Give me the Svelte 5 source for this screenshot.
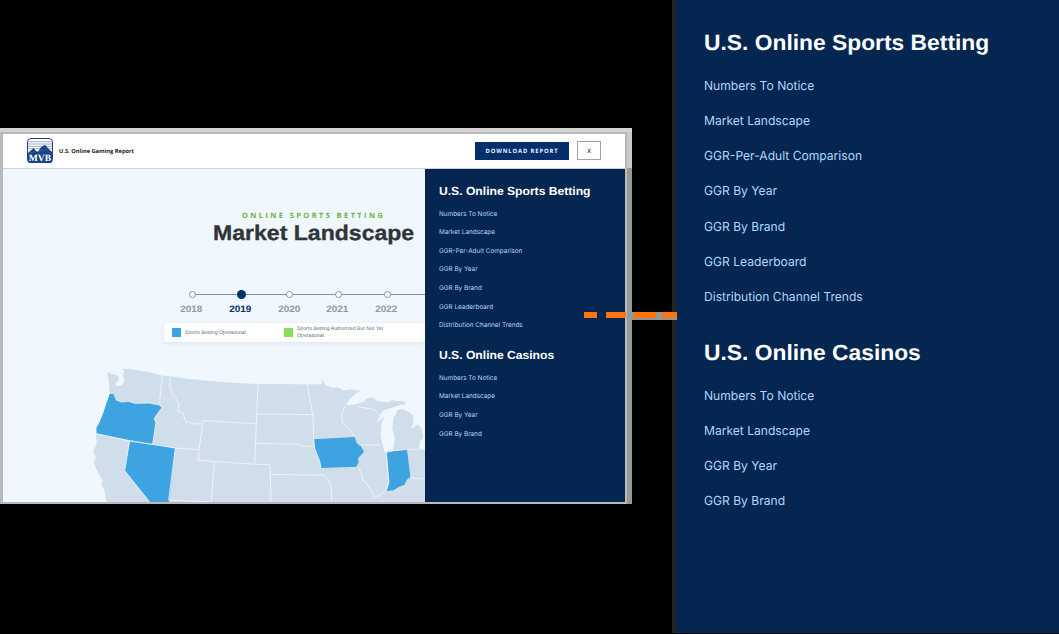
<script>
  const sections = [
    {
      title: 'U.S. Online Sports Betting',
      links: [
        'Numbers To Notice',
        'Market Landscape',
        'GGR-Per-Adult Comparison',
        'GGR By Year',
        'GGR By Brand',
        'GGR Leaderboard',
        'Distribution Channel Trends'
      ]
    },
    {
      title: 'U.S. Online Casinos',
      links: ['Numbers To Notice', 'Market Landscape', 'GGR By Year', 'GGR By Brand']
    }
  ];
  const years = [2018, 2019, 2020, 2021, 2022];
  const activeYear = 2019;
</script>

{#snippet menu()}
  {#each sections as section}
    <section>
      <h2>{section.title}</h2>
      <ul>
        {#each section.links as link}
          <li>{link}</li>
        {/each}
      </ul>
    </section>
  {/each}
{/snippet}

<div class="stage">
  <div class="window">
    <div class="screen">
      <header>
        <svg class="logo" viewBox="0 0 78 76" width="26" height="25.3">
          <rect x="1.5" y="1.5" width="75" height="73" rx="10" fill="#fff" stroke="#17407f" stroke-width="3" />
          <path d="M4 11h70M3 18h72M3 25h72M3 32h72" stroke="#8796bb" stroke-width="2.5" />
          <path d="M2 46 L12 37 L20 31 L27 39 L33 41 L42 28 L54 20 L64 32 L76 43 V66 Q76 75 66 75 H12 Q2 75 2 66Z" fill="#174481" />
          <path d="M4 49l8-7 5 3 4-6M35 46l9-12 5 6 6-9M60 38l6 6 8 5" fill="none" stroke="#4f73a5" stroke-width="1.5" />
          <text x="39" y="70" text-anchor="middle" textLength="67" lengthAdjust="spacingAndGlyphs">MVB</text>
        </svg>
        <span class="report">U.S. Online Gaming Report</span>
        <button class="download">DOWNLOAD REPORT</button>
        <button class="close">X</button>
      </header>
      <div class="body">
        <main>
          <p class="eyebrow">ONLINE SPORTS BETTING</p>
          <h1>Market Landscape</h1>
          <ol class="timeline">
            {#each years as year}
              <li class:active={year === activeYear}>
                <i></i>
                <span>{year}</span>
              </li>
            {/each}
          </ol>
          <div class="legend">
            <i class="blue"></i>
            <span class="first">Sports Betting Operational</span>
            <i class="green"></i>
            <span>Sports Betting Authorized But Not Yet<br />Operational</span>
          </div>
          <svg class="map" viewBox="-231 -30 1266 471" width="422" height="157">
            <path
              fill="#d0deeb"
              d="M82 52 L98 58 L112 61 L118 70 L114 78 L107 84 L110 93 L122 92 L131 84 L132 68 L127 60 L133 52 L126 42 L146 41 L170 46 L206 51 L247 62 L271 64 L320 71 L400 79 L470 84 L534 87 L682 88 L726 88 L725 75 L730 76 L736 91 L760 98 L774 97 L790 106 L815 103 L842 107 L822 120 L809 133 L798 149 L812 151 L832 146 L850 141 L862 130 L876 127 L892 138 L920 142 L938 136 L950 138 L970 138 L979 147 L958 151 L945 155 L926 161 L910 166 L900 182 L891 203 L908 188 L914 180 L905 205 L902 239 L907 268 L913 291 L938 286 L943 262 L944 245 L937 220 L940 190 L953 165 L966 161 L990 173 L1000 184 L1000 205 L993 222 L1004 216 L1014 206 L1026 226 L1030 247 L1020 259 L1018 278 L1035 284 V441 H80 L75 420 L74 405 L64 393 L67 376 L62 368 L48 340 L42 320 L48 307 L40 290 L50 265 L48 238 L62 195 L80 145 L89 118 L87 84Z"
            />
            <g class="lit">
              <path d="M89 117 L100 117 L107 134 L125 141 L145 139 L166 145 L208 144 L239 150 L246 158 L232 177 L223 191 L228 203 L218 267 L135 253 L50 236 L49 219 L58 203 L70 173Z" />
              <path d="M149 257 L286 279 L270 420 L267 441 H209 L134 347Z" />
              <path d="M702 253 L824 246 L830 264 L841 271 L852 290 L838 306 L834 309 L836 321 L829 335 L723 339 L719 318 L704 280Z" />
              <path d="M920 292 L981 283 L991 366 L980 375 L973 390 L956 396 L941 406 L920 408 L928 382Z" />
            </g>
            <g class="lines">
              <path d="M107 134L125 141 145 139 166 145 208 144 238 150M247 62L240 127 239 150 246 158 232 177 223 191 228 203 218 267M271 64L268 89 276 115 289 132 297 148 293 168 307 172 318 204 325 200 334 206 366 207M370 197L526 206M370 197L357 282 355 316M50 236L149 258 286 279 357 284M355 316L526 328M286 279L266 435 395 441M403 323L394 438M534 87L529 206 524 326M529 177L698 179M528 265L658 268 675 275 701 273M526 328H570L573 441M573 358L732 361 745 375 754 393V441M682 88L692 148 699 179 701 252 704 280 719 318 723 339M798 149L785 175 787 204 813 226 823 246M832 155L885 164 899 182M836 270L902 270M834 338L845 355 848 374 864 393 878 413 883 432" />
              <path d="M919 292L926 382 918 408 884 428M920 292L943 286 1035 281M991 366L1004 370 1035 372M149 257L134 347 209 441" />
            </g>
          </svg>
        </main>
        <aside class="menu small">{@render menu()}</aside>
      </div>
    </div>
  </div>
  <aside class="menu large">{@render menu()}</aside>
  <svg class="connector" width="94" height="10" viewBox="0 0 94 10">
    <path fill="#949494" d="M48 1h45v8H48z" />
    <path fill="#ff7410" d="M0 1h13v6H0zM22 1h20v6H22zM50 1h22v6H50zM78 1h15v6H78z" />
    <path fill="#949494" d="M72 1h6v8h-6z" />
  </svg>
</div>

<style>
  :global(body) { margin: 0; background: #000; }
  .stage { position: relative; display: flex; width: 1059px; height: 634px; background: #000; overflow: hidden; font-family: "Liberation Sans", Arial, sans-serif; text-rendering: geometricPrecision; }
  .window { box-sizing: border-box; width: 632px; height: 376px; margin: 128px 40px 0 0; padding: 4px 5px 0 0; background: linear-gradient(#d4d4d4 0 4px, transparent 4px), linear-gradient(#cbcbcb 0 40px, #989898 40px); }
  .screen { box-sizing: border-box; width: 627px; height: 372px; border: solid #b9b9bb; border-width: 2px 2px 2px 3px; overflow: hidden; display: flex; flex-direction: column; }
  header { box-sizing: border-box; height: 35px; flex: none; display: flex; align-items: center; padding: 0 24px 1px 23px; background: #fff; border-bottom: 1px solid #cbd1d7; }
  .logo { flex: none; margin-left: .5px; }
  .logo text { font: bold 29px "Liberation Serif", serif; fill: #fff; }
  .report { margin-left: 6.5px; font: bold 5.7px "Open Sans", sans-serif; color: #1c1c1c; white-space: nowrap; }
  button { box-sizing: border-box; padding: 0; border-radius: 0; font-family: "Open Sans", sans-serif; text-rendering: inherit; }
  .download { margin-left: auto; width: 94px; height: 18px; border: 0; background: #032f6b; color: #e9f5ff; font-size: 5.8px; font-weight: 700; letter-spacing: .91px; }
  .close { width: 24px; height: 19px; margin-left: 8px; border: 1px solid #a2a2a2; background: #fff; color: #333; font-size: 6px; font-weight: 600; }
  .body { flex: 1; min-height: 0; display: flex; }
  main { box-sizing: border-box; width: 422px; display: flex; flex-direction: column; background: #f0f7fe; overflow: hidden; }
  p, h1, h2, ul, ol { margin: 0; padding: 0; list-style: none; }
  .eyebrow { margin: 42px 0 0 239px; font: 700 7.4px/10px "Open Sans", sans-serif; letter-spacing: 2.45px; color: #66b338; white-space: nowrap; }
  h1 { margin: 0 0 1px 210px; width: max-content; font-size: 21px; line-height: 25px; color: #303539; white-space: nowrap; transform: scaleX(1.098); transform-origin: 0 0; -webkit-text-stroke: .35px #303539; }
  .timeline { display: flex; margin: 42px 0 0 165.4px; height: 34px; background: linear-gradient(#8791a6, #8791a6) 25px 5px / 300px 1px no-repeat; }
  .timeline li { width: 48.6px; flex: none; display: flex; flex-direction: column; align-items: center; }
  .timeline i { box-sizing: border-box; width: 7px; height: 7px; margin: 2px 0; border: 1px solid #8b93a0; border-radius: 50%; background: #fff; }
  .timeline .active i { width: 9px; height: 9px; margin: 1px 0; border: 0; background: #04306c; }
  .timeline span { margin: 3px 2px 0 0; font-size: 9.3px; font-weight: 700; line-height: 12px; color: #93989f; transform: scaleX(1.07); }
  .timeline .active span { color: #06306a; }
  .legend { box-sizing: border-box; display: flex; align-items: center; height: 19px; flex: none; margin: 0 0 3px 161px; padding-left: 8px; background: #fff; box-shadow: 0 1px 3px #bfcbd880; font-size: 5.2px; line-height: 7px; color: #666c73; white-space: nowrap; }
  .legend span { padding-top: 1px; }
  .legend i { width: 9px; height: 9px; margin-right: 4px; }
  .legend .first { width: 99px; }
  .blue { background: #3da3e1; }
  .green { background: #87de5b; }
  .map { display: block; flex: none; }
  .lit path { fill: #3da3e1; }
  .lines { fill: none; stroke: #f0f6fc; stroke-width: 2.5; stroke-linejoin: round; }
  .menu { box-sizing: border-box; background: #042650; color: #b0d7fb; white-space: nowrap; }
  .menu ul { font-family: Inter, sans-serif; transform-origin: 0 0; transform: scaleX(.967); }
  .menu h2 { width: max-content; color: #fff; font-weight: 700; transform: scaleX(1.037); transform-origin: 0 0; }
  .large { width: 387px; height: 633px; padding: 28.6px 0 0 28px; border-left: 4px solid #222523; }
  .large h2 { font-size: 22px; line-height: 28px; }
  .large ul { margin: 12px 0 23.2px; font-size: 12.5px; }
  .large li { height: 35.27px; line-height: 35.27px; }
  .small { width: 200px; padding: 14.5px 0 0 14px; }
  .small h2 { font-size: 11.7px; line-height: 15px; }
  .small ul { margin: 6px 0 12.6px; font-size: 6.6px; }
  .small li { height: 18.65px; line-height: 18.65px; }
  .connector { position: absolute; left: 584px; top: 311px; }
</style>
